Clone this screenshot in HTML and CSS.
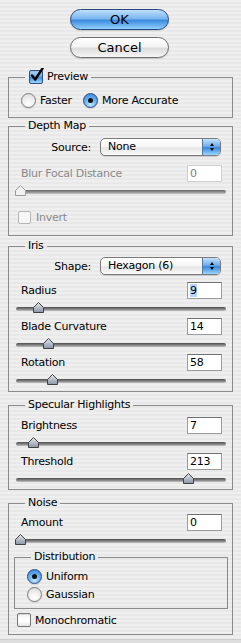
FILE: index.html
```html
<!DOCTYPE html>
<html lang="en">
<head>
    <meta charset="UTF-8">
    <title>Lens Blur</title>
    <link rel="stylesheet" href="styles.css">
</head>
<body>
    <div class="dialog">
        <div class="buttons">
            <button class="btn btn-default">OK</button>
            <button class="btn">Cancel</button>
        </div>

        <fieldset class="group group-preview">
            <legend>
                <span class="check">
                    <span class="box checked">
                        <svg width="16" height="16" viewBox="0 0 16 16"><path d="M3 7.5 L6.2 11.5 L13.5 0.5" fill="none" stroke="#000" stroke-width="2.4" stroke-linecap="round" stroke-linejoin="round"/></svg>
                    </span>
                    Preview
                </span>
            </legend>
            <div class="radios inline">
                <span class="radio"><span class="dot"></span>Faster</span>
                <span class="radio on"><span class="dot"></span>More Accurate</span>
            </div>
        </fieldset>

        <fieldset class="group group-depth">
            <legend>Depth Map</legend>
            <div class="popup-row">
                <span class="popup-label">Source:</span>
                <span class="popup">
                    <span class="popup-text">None</span>
                    <span class="popup-cap"><span class="up"></span><span class="down"></span></span>
                </span>
            </div>
            <div class="param disabled">
                <span class="param-label">Blur Focal Distance</span>
                <span class="num">0</span>
            </div>
            <div class="slider disabled">
                <div class="track"></div>
                <svg class="thumb" style="left: -1px" width="11" height="11" viewBox="0 0 11 11"><path d="M0.5 10.5 V5.5 L5.5 0.5 L10.5 5.5 V10.5 Z" fill="#f2f2f2" stroke="#9a9a9a"/></svg>
            </div>
            <div class="check-row disabled">
                <span class="box small"></span>Invert
            </div>
        </fieldset>

        <fieldset class="group group-iris">
            <legend>Iris</legend>
            <div class="popup-row">
                <span class="popup-label">Shape:</span>
                <span class="popup">
                    <span class="popup-text">Hexagon (6)</span>
                    <span class="popup-cap"><span class="up"></span><span class="down"></span></span>
                </span>
            </div>
            <div class="param first">
                <span class="param-label">Radius</span>
                <span class="num"><span class="sel">9</span></span>
            </div>
            <div class="slider">
                <div class="track"></div>
                <svg class="thumb" style="left: 17px" width="11" height="11" viewBox="0 0 11 11"><defs><linearGradient id="tg" x1="0" y1="0" x2="0" y2="1"><stop offset="0" stop-color="#e4e8f0"/><stop offset="1" stop-color="#8c94a4"/></linearGradient></defs><path d="M0.5 10.5 V5.5 L5.5 0.5 L10.5 5.5 V10.5 Z" fill="url(#tg)" stroke="#404040"/></svg>
            </div>
            <div class="param">
                <span class="param-label">Blade Curvature</span>
                <span class="num">14</span>
            </div>
            <div class="slider">
                <div class="track"></div>
                <svg class="thumb" style="left: 27px" width="11" height="11" viewBox="0 0 11 11"><path d="M0.5 10.5 V5.5 L5.5 0.5 L10.5 5.5 V10.5 Z" fill="url(#tg)" stroke="#404040"/></svg>
            </div>
            <div class="param">
                <span class="param-label">Rotation</span>
                <span class="num">58</span>
            </div>
            <div class="slider">
                <div class="track"></div>
                <svg class="thumb" style="left: 31px" width="11" height="11" viewBox="0 0 11 11"><path d="M0.5 10.5 V5.5 L5.5 0.5 L10.5 5.5 V10.5 Z" fill="url(#tg)" stroke="#404040"/></svg>
            </div>
        </fieldset>

        <fieldset class="group group-specular">
            <legend>Specular Highlights</legend>
            <div class="param first">
                <span class="param-label">Brightness</span>
                <span class="num">7</span>
            </div>
            <div class="slider">
                <div class="track"></div>
                <svg class="thumb" style="left: 12px" width="11" height="11" viewBox="0 0 11 11"><path d="M0.5 10.5 V5.5 L5.5 0.5 L10.5 5.5 V10.5 Z" fill="url(#tg)" stroke="#404040"/></svg>
            </div>
            <div class="param">
                <span class="param-label">Threshold</span>
                <span class="num">213</span>
            </div>
            <div class="slider">
                <div class="track"></div>
                <svg class="thumb" style="left: 167px" width="11" height="11" viewBox="0 0 11 11"><path d="M0.5 10.5 V5.5 L5.5 0.5 L10.5 5.5 V10.5 Z" fill="url(#tg)" stroke="#404040"/></svg>
            </div>
        </fieldset>

        <fieldset class="group group-noise">
            <legend>Noise</legend>
            <div class="param first">
                <span class="param-label">Amount</span>
                <span class="num">0</span>
            </div>
            <div class="slider">
                <div class="track"></div>
                <svg class="thumb" style="left: -1px" width="11" height="11" viewBox="0 0 11 11"><path d="M0.5 10.5 V5.5 L5.5 0.5 L10.5 5.5 V10.5 Z" fill="url(#tg)" stroke="#404040"/></svg>
            </div>
            <fieldset class="group group-dist">
                <legend>Distribution</legend>
                <div class="radios stacked">
                    <span class="radio on"><span class="dot"></span>Uniform</span>
                    <span class="radio"><span class="dot"></span>Gaussian</span>
                </div>
            </fieldset>
            <div class="check-row mono">
                <span class="box"></span>Monochromatic
            </div>
        </fieldset>

        <div class="footer"></div>
    </div>
</body>
</html>
```

FILE: styles.css
```css
body {
    margin: 0;
    width: 241px;
    height: 643px;
    overflow: hidden;
    font-family: "DejaVu Sans", Verdana, sans-serif;
    font-size: 11px;
    letter-spacing: -0.25px;
    color: #000;
    background: repeating-linear-gradient(#efefef 0, #efefef 2px, #e8e8e8 2px, #e8e8e8 4px);
}

.dialog {
    padding-top: 9px;
}

/* Push buttons */
.buttons {
    display: flex;
    flex-direction: column;
    gap: 7px;
    padding-left: 70px;
}

.btn {
    width: 99px;
    height: 21px;
    padding: 0;
    border: 1px solid #6c6c6c;
    border-radius: 11px;
    font-family: "DejaVu Sans", Verdana, sans-serif;
    font-size: 13px;
    line-height: 19px;
    color: #000;
    background: linear-gradient(#ffffff 0, #f4f4f4 45%, #dcdcdc 55%, #f6f6f6 100%);
    box-shadow: 0 1px 1px rgba(0, 0, 0, 0.15);
}

.btn-default {
    border-color: #27477d;
    background: linear-gradient(#bfdffb 0, #7bb6ef 45%, #3d8be0 55%, #8fd2fd 100%);
}

/* Group boxes */
.group {
    margin: 0 8px;
    padding: 0;
    border: 1px solid #8b8b8b;
    min-width: 0;
}

.group legend {
    margin-left: 16px;
    padding: 0 3px;
    height: 14px;
    line-height: 14px;
}

.group-preview {
    margin-top: 12px;
    padding-bottom: 9px;
}

.group-depth {
    margin-top: 1px;
    padding-bottom: 11px;
}

.group-iris {
    margin-top: 3px;
    padding-bottom: 1px;
}

.group-specular {
    margin-top: 6px;
}

.group-noise {
    margin-top: 6px;
    padding-bottom: 7px;
}

.group-dist {
    margin: 0 4px 0 5px;
    padding-bottom: 6px;
}

/* Checkboxes */
.check {
    display: flex;
    align-items: center;
    gap: 4px;
}

.box {
    position: relative;
    display: inline-block;
    width: 14px;
    height: 14px;
    box-sizing: border-box;
    border: 1px solid #767676;
    border-radius: 2px;
    background: linear-gradient(#f4f4f4, #ffffff 60%, #e6e6e6);
    box-shadow: inset 0 1px 1px rgba(0, 0, 0, 0.12);
}

.box.small {
    width: 13px;
    height: 13px;
}

.box.checked {
    margin-left: 1px;
    border-color: #2e4f86;
    background: linear-gradient(#b8dcfb, #5ea4ea 50%, #3b88de 50%, #9ad6fd);
}

.box svg {
    position: absolute;
    left: -1px;
    top: -3px;
}

.check-row {
    display: flex;
    align-items: center;
    gap: 5px;
    height: 14px;
    margin-top: 9px;
    padding-left: 9px;
}

.check-row.mono {
    margin-top: 4px;
    padding-left: 8px;
    gap: 4px;
}

.check-row.disabled {
    color: #8a8a8a;
}

.check-row.disabled .box {
    border-color: #b4b4b4;
    background: #f6f6f6;
    box-shadow: none;
}

/* Radio buttons */
.radios {
    display: flex;
    padding-left: 12px;
}

.radios.inline {
    margin-top: 8px;
    gap: 11px;
}

.radios.stacked {
    flex-direction: column;
    gap: 2px;
    margin-top: 4px;
}

.radio {
    display: flex;
    align-items: center;
    gap: 4px;
    height: 16px;
}

.dot {
    position: relative;
    width: 15px;
    height: 15px;
    box-sizing: border-box;
    border: 1px solid #7b7b7b;
    border-radius: 50%;
    background: radial-gradient(circle at 50% 75%, #ffffff 0, #f2f2f2 40%, #d6d6d6 100%);
    box-shadow: 0 1px 1px rgba(0, 0, 0, 0.12);
}

.radio.on .dot {
    border-color: #2a4c84;
    background: radial-gradient(circle at 50% 80%, #bfeaff 0, #6fb3f0 45%, #2f7bd6 100%);
}

.radio.on .dot::after {
    content: "";
    position: absolute;
    left: 4px;
    top: 4px;
    width: 5px;
    height: 5px;
    border-radius: 50%;
    background: #111;
}

/* Popup menus */
.popup-row {
    display: flex;
    align-items: center;
    gap: 9px;
    height: 18px;
}

.group-depth .popup-row {
    margin-top: 5px;
}

.group-iris .popup-row {
    margin-top: 4px;
}

.popup-label {
    width: 82px;
    text-align: right;
}

.popup {
    display: flex;
    width: 121px;
    height: 18px;
    box-sizing: border-box;
    border: 1px solid #7a7a7a;
    border-radius: 5px;
    background: linear-gradient(#ffffff 0, #f5f5f5 50%, #e4e4e4 55%, #fbfbfb 100%);
    box-shadow: 0 1px 1px rgba(0, 0, 0, 0.15);
    overflow: hidden;
}

.popup-text {
    flex: 1;
    padding-left: 7px;
    line-height: 16px;
}

.popup-cap {
    width: 17px;
    display: flex;
    flex-direction: column;
    align-items: center;
    justify-content: center;
    gap: 2px;
    border-left: 1px solid #55789f;
    background: linear-gradient(#c4e2fc 0, #6eaef0 45%, #3a86dc 55%, #9ad8fd 100%);
}

.up,
.down {
    width: 0;
    height: 0;
    border-left: 2.5px solid transparent;
    border-right: 2.5px solid transparent;
}

.up {
    border-bottom: 3px solid #000;
}

.down {
    border-top: 3px solid #000;
}

/* Labelled value rows with sliders */
.param {
    display: flex;
    justify-content: space-between;
    align-items: center;
    height: 17px;
    padding: 0 10px 0 12px;
    margin-top: 9px;
}

.group-iris .param,
.group-specular .param {
    margin-top: 0;
}

.group-iris .param.first {
    margin-top: 7px;
}

.group-specular .param.first {
    margin-top: 5px;
}

.group-noise .param.first {
    margin-top: 4px;
}

.param.disabled {
    color: #8a8a8a;
}

.num {
    width: 35px;
    height: 17px;
    box-sizing: border-box;
    border: 1px solid #9c9c9c;
    border-top-color: #707070;
    background: #fff;
    padding-left: 2px;
    line-height: 15px;
    color: #000;
}

.param.disabled .num {
    border-color: #cfcfcf;
    color: #808080;
}

.sel {
    background: #b5d5ff;
}

.slider {
    position: relative;
    height: 19px;
    box-sizing: border-box;
    padding-top: 8px;
    margin: 0 6px 0 7px;
}

.track {
    height: 4px;
    border-radius: 2px;
    background: linear-gradient(#4e4e4e, #8a8a8a 60%, #c4c4c4);
}

.slider.disabled .track {
    background: linear-gradient(#666, #9a9a9a 60%, #cccccc);
}

.thumb {
    position: absolute;
    top: 3px;
}

.footer {
    margin-top: 4px;
    height: 6px;
    border-top: 1px solid #cfcfcf;
    background: #dedede;
}
```
